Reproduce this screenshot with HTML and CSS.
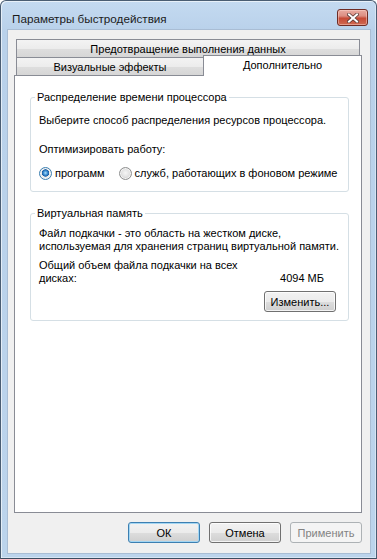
FILE: index.html
```html
<!DOCTYPE html>
<html lang="ru">
<head>
    <meta charset="UTF-8">
    <meta name="viewport" content="width=device-width, initial-scale=1.0">
    <title>Параметры быстродействия</title>
    <link rel="stylesheet" href="styles.css">
</head>
<body>
    <div class="window">
        <div class="titlebar">
            <span class="title">Параметры быстродействия</span>
            <button class="close-btn" aria-label="Закрыть">
                <svg width="12" height="10" viewBox="0 0 12 10">
                    <path d="M2 1.5 L10 8.5 M10 1.5 L2 8.5" stroke="#5a3a36" stroke-width="3.6" stroke-linecap="square" fill="none"/>
                    <path d="M2 1.5 L10 8.5 M10 1.5 L2 8.5" stroke="#ffffff" stroke-width="2" stroke-linecap="square" fill="none"/>
                </svg>
            </button>
        </div>

        <div class="client">
            <div class="tab-control">
                <div class="tab-row">
                    <div class="tab tab-wide">Предотвращение выполнения данных</div>
                </div>
                <div class="tab-row">
                    <div class="tab tab-visual">Визуальные эффекты</div>
                    <div class="tab tab-selected">Дополнительно</div>
                </div>

                <div class="tab-panel">
                    <fieldset class="group group-cpu">
                        <legend>Распределение времени процессора</legend>
                        <p class="line">Выберите способ распределения ресурсов процессора.</p>
                        <p class="line optimize">Оптимизировать работу:</p>
                        <div class="radio-row">
                            <label class="radio-item">
                                <span class="radio checked"></span>
                                <span>программ</span>
                            </label>
                            <label class="radio-item">
                                <span class="radio"></span>
                                <span>служб, работающих в фоновом режиме</span>
                            </label>
                        </div>
                    </fieldset>

                    <fieldset class="group group-memory">
                        <legend>Виртуальная память</legend>
                        <p class="line">Файл подкачки - это область на жестком диске,<br>используемая для хранения страниц виртуальной памяти.</p>
                        <div class="total-row">
                            <span class="total-label">Общий объем файла подкачки на всех<br>дисках:</span>
                            <span class="total-value">4094 МБ</span>
                        </div>
                        <div class="change-row">
                            <button class="btn">Изменить...</button>
                        </div>
                    </fieldset>
                </div>
            </div>

            <div class="dialog-buttons">
                <button class="btn btn-default">ОК</button>
                <button class="btn">Отмена</button>
                <button class="btn" disabled>Применить</button>
            </div>
        </div>
    </div>
</body>
</html>
```

FILE: styles.css
```css
* {
    box-sizing: border-box;
}

html, body {
    margin: 0;
    padding: 0;
    width: 377px;
    height: 559px;
    background: #ffffff;
    overflow: hidden;
}

body {
    font-family: "Liberation Sans", Arial, sans-serif;
    font-size: 11px;
    color: #000;
    white-space: nowrap;
}

.window {
    width: 377px;
    height: 559px;
    border: 1px solid #4a5d73;
    border-bottom-color: #3b4c60;
    border-radius: 6px 6px 0 0;
    padding: 0 6px 5px 7px;
    background: linear-gradient(#c4daf1 0, #b9d1ea 30px, #bcd4ec 100%);
    box-shadow: inset 1px 1px 0 rgba(255,255,255,0.6), inset -1px -1px 0 rgba(255,255,255,0.4);
    display: flex;
    flex-direction: column;
}

.titlebar {
    height: 29px;
    display: flex;
    align-items: flex-start;
    padding-left: 4px;
}

.title {
    font-size: 11.7px;
    color: #1b1b1b;
    margin-top: 11px;
}

.close-btn {
    margin-left: auto;
    margin-right: 2px;
    margin-top: 8px;
    width: 31px;
    height: 17px;
    padding: 0;
    border: 1px solid #6e2c25;
    border-radius: 3px;
    background: linear-gradient(#e9aba1 0%, #dc8e82 40%, #c64a36 55%, #cf6a52 100%);
    box-shadow: inset 0 0 0 1px rgba(255,220,210,0.45);
    display: flex;
    align-items: center;
    justify-content: center;
}

.client {
    flex: 1;
    background: #f0f0f0;
    display: flex;
    flex-direction: column;
    box-shadow: 0 0 0 1px #a9bdd4;
}

.tab-control {
    margin: 9px 0 0 6px;
    width: 348px;
    display: flex;
    flex-direction: column;
}

.tab-row {
    display: flex;
    padding-left: 2px;
}

.tab {
    height: 18px;
    border: 1px solid #898c95;
    border-bottom: none;
    background: linear-gradient(#f3f3f3 0%, #ececec 50%, #dedede 51%, #d6d6d6 100%);
    display: flex;
    align-items: center;
    justify-content: center;
}

.tab-wide {
    width: 344px;
}

.tab-visual {
    width: 187px;
    border-right: none;
}

.tab-selected {
    position: relative;
    z-index: 1;
    width: 159px;
    height: 21px;
    margin-top: -2px;
    margin-bottom: -1px;
    background: #ffffff;
    padding-bottom: 2px;
}

.tab-panel {
    height: 438px;
    border: 1px solid #898c95;
    background: #ffffff;
    padding: 14px 0 0 15px;
}

.group {
    width: 319px;
    min-width: 0;
    margin: 0;
    border: 1px solid #d5dfe5;
    border-radius: 3px;
    padding: 0 12px 0 8px;
}

.group legend {
    margin-left: -4px;
    padding: 0 2px;
    line-height: 14px;
    color: #000;
}

.line {
    margin: 0;
    line-height: 13px;
}

.group-cpu {
    padding-top: 10px;
    padding-bottom: 11px;
}

.optimize {
    margin-top: 16px;
}

.radio-row {
    display: flex;
    align-items: center;
    margin-top: 10px;
    height: 14px;
}

.radio-item {
    display: flex;
    align-items: center;
    gap: 3px;
}

.radio-item + .radio-item {
    margin-left: 14px;
}

.radio {
    width: 13px;
    height: 13px;
    border-radius: 50%;
    border: 1px solid #8e8f8f;
    background: radial-gradient(circle at 50% 45%, #f6f6f6 0, #e1e1e1 4px, #c9c9c9 6px);
    box-shadow: inset 0 0 0 1px #f4f4f4;
}

.radio.checked {
    border-color: #3c7fb1;
    background:
        radial-gradient(circle at 50% 45%, #aee0fb 0, #3e8fd3 2px, #1b5ea4 3.4px, transparent 4px),
        radial-gradient(circle, #f8f8f8 0, #e3e3e3 6px);
}

.group-memory {
    margin-top: 14px;
    padding-top: 7px;
    padding-bottom: 8px;
}

.total-row {
    display: flex;
    align-items: flex-end;
    margin-top: 6px;
    line-height: 13px;
}

.total-value {
    margin-left: auto;
    margin-right: 12px;
}

.change-row {
    display: flex;
    justify-content: flex-end;
    margin-top: 6px;
}

.btn {
    width: 72px;
    height: 21px;
    padding: 0;
    font-family: "Liberation Sans", Arial, sans-serif;
    font-size: 11px;
    color: #000;
    border: 1px solid #707070;
    border-radius: 3px;
    background: linear-gradient(#f2f2f2 0%, #ebebeb 50%, #dddddd 51%, #cfcfcf 100%);
    box-shadow: inset 0 0 0 1px rgba(255,255,255,0.75);
}

.btn-default {
    border-color: #3c7fb1;
    box-shadow: inset 0 0 0 1px #a3d6f3;
}

.btn:disabled {
    border-color: #adb2b5;
    background: #f4f4f4;
    color: #838383;
    box-shadow: none;
}

.dialog-buttons {
    display: flex;
    justify-content: flex-end;
    gap: 9px;
    margin-top: 9px;
    margin-right: 8px;
}
```
